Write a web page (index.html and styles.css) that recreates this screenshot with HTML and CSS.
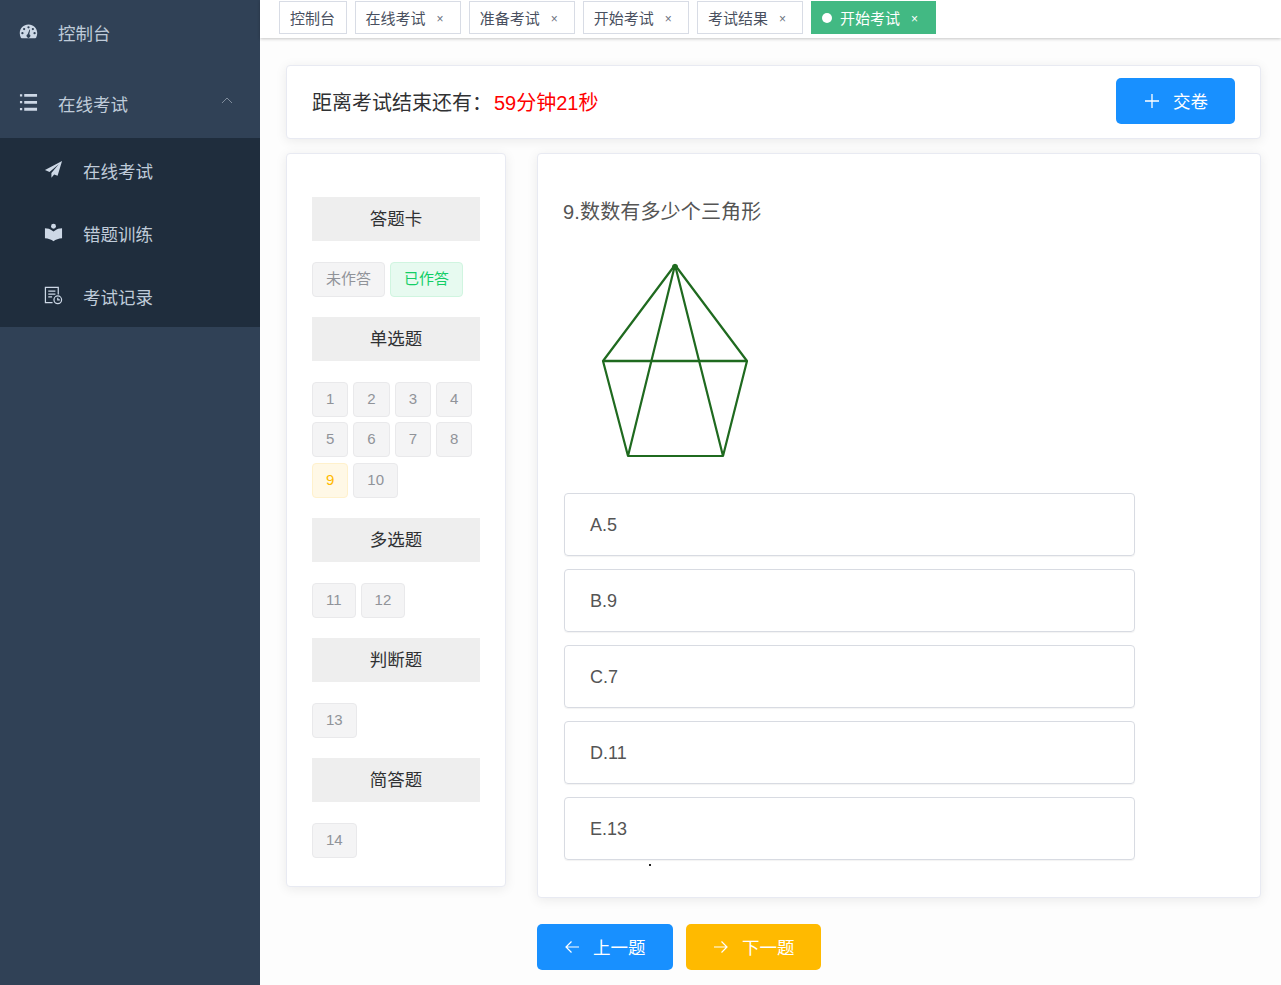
FILE: index.html
```html
<!DOCTYPE html>
<html lang="zh-CN">
<head>
    <meta charset="UTF-8">
    <title>开始考试</title>
    <link rel="stylesheet" href="styles.css">
</head>
<body>
    <div class="app">
        <aside class="sidebar">
            <div class="menu-item">
                <svg class="menu-icon" viewBox="0 0 20 20"><path fill-rule="evenodd" d="M10 2.500C4.800 2.500 .8 6.600.8 11.800c0 1.700.5 3.300 1.200 4.700.2.300.5.500.9.500h14.200c.4 0 .7-.2.9-.5.7-1.400 1.200-3 1.200-4.700 0-5.200-4-9.300-9.200-9.300zM10 4.400a1.200 1.200 0 1 1 0 2.400 1.200 1.200 0 0 1 0-2.400zM5.400 6.200a1.200 1.200 0 1 1 0 2.400 1.200 1.200 0 0 1 0-2.400zM3.600 10.600a1.200 1.200 0 1 1 0 2.400 1.200 1.200 0 0 1 0-2.400zM16.400 10.600a1.200 1.200 0 1 1 0 2.400 1.200 1.200 0 0 1 0-2.400zM14.600 6.200a1.200 1.200 0 1 1 0 2.400 1.200 1.200 0 0 1 0-2.400zM11.200 7.600l.5 1-.9 4.400a1.900 1.900 0 1 1-1.700 0z"/></svg>
                <span>控制台</span>
            </div>
            <div class="menu-item">
                <svg class="menu-icon" viewBox="0 0 20 20"><path d="M1 1.200h2.400v2.400H1zM1 8.500h2.400v2.400H1zM1 15.800h2.400v2.400H1zM5.500 1H19v3H5.500zM5.500 8.300H19v3H5.500zM5.500 15.600H19v3H5.500z"/></svg>
                <span>在线考试</span>
                <svg class="menu-arrow" viewBox="0 0 12 7"><path d="M1 6l5-5 5 5" fill="none" stroke="currentColor"/></svg>
            </div>
            <div class="submenu">
                <div class="submenu-item">
                    <svg class="menu-icon" viewBox="0 0 20 20"><path d="M19 1L1 10.500l4.800 2.100L15.500 4.500 7.800 13.800v4.900l2.900-3.500 3.600 1.500z"/></svg>
                    <span>在线考试</span>
                </div>
                <div class="submenu-item">
                    <svg class="menu-icon" viewBox="0 0 20 20"><circle cx="10" cy="3.500" r="2.600"/><path d="M1 5.500c3 0 5.500.7 7 2.200l2 1.300 2-1.300c1.500-1.500 4-2.200 7-2.200v10.500c-3.500.2-6.800 1.300-9 3.200-2.200-1.900-5.500-3-9-3.200z"/></svg>
                    <span>错题训练</span>
                </div>
                <div class="submenu-item">
                    <svg class="menu-icon icon-line" viewBox="0 0 20 20"><path d="M15 9V1.500H1.500v16H9"/><path d="M4.500 5.500h7.500M4.500 8.500h7.500M4.500 11.500h4"/><circle cx="14.500" cy="14.500" r="4"/><path d="M14.500 12.300v2.400h2.200"/></svg>
                    <span>考试记录</span>
                </div>
            </div>
        </aside>

        <div class="main">
            <div class="tabs">
                <div class="tab">控制台</div>
                <div class="tab">在线考试<span class="tab-close">×</span></div>
                <div class="tab">准备考试<span class="tab-close">×</span></div>
                <div class="tab">开始考试<span class="tab-close">×</span></div>
                <div class="tab">考试结果<span class="tab-close">×</span></div>
                <div class="tab active"><span class="tab-dot"></span>开始考试<span class="tab-close">×</span></div>
            </div>

            <div class="content">
                <div class="card timer-card">
                    <div class="timer">距离考试结束还有：<span class="time-left">59分钟21秒</span></div>
                    <button class="btn btn-blue submit-btn">
                        <svg class="btn-icon" viewBox="0 0 14 14"><path d="M7 0v14M0 7h14" fill="none" stroke="currentColor" stroke-width="1.300"/></svg>
                        <span>交卷</span>
                    </button>
                </div>

                <div class="exam">
                    <div class="card answer-card">
                        <div class="group-title">答题卡</div>
                        <div class="tag-row">
                            <span class="tag">未作答</span>
                            <span class="tag tag-done">已作答</span>
                        </div>
                        <div class="group-title">单选题</div>
                        <div class="tag-row">
                            <span class="tag">1</span>
                            <span class="tag">2</span>
                            <span class="tag">3</span>
                            <span class="tag">4</span>
                            <span class="tag">5</span>
                            <span class="tag">6</span>
                            <span class="tag">7</span>
                            <span class="tag">8</span>
                            <span class="tag tag-current">9</span>
                            <span class="tag">10</span>
                        </div>
                        <div class="group-title">多选题</div>
                        <div class="tag-row">
                            <span class="tag">11</span>
                            <span class="tag">12</span>
                        </div>
                        <div class="group-title">判断题</div>
                        <div class="tag-row">
                            <span class="tag">13</span>
                        </div>
                        <div class="group-title">简答题</div>
                        <div class="tag-row">
                            <span class="tag">14</span>
                        </div>
                    </div>

                    <div class="question-col">
                        <div class="card question-card">
                            <div class="question-title">9.数数有多少个三角形</div>
                            <svg class="question-img" viewBox="564 245 220 230">
                                <g fill="none" stroke="#1f6a1f" stroke-width="2.200" stroke-linejoin="round">
                                    <path d="M675 265L603 361L628 456H723L747 361L675 265Z"/>
                                    <path d="M675 265L628 456M675 265L723 456"/>
                                    <path d="M603 361H747" stroke-width="2.600"/>
                                </g>
                                <circle cx="675" cy="267" r="3" fill="#1f6a1f"/>
                            </svg>
                            <div class="options">
                                <div class="option">A.5</div>
                                <div class="option">B.9</div>
                                <div class="option">C.7</div>
                                <div class="option">D.11</div>
                                <div class="option">E.13</div>
                            </div>
                            <div class="speck"></div>
                        </div>

                        <div class="pager">
                            <button class="btn btn-blue pager-btn">
                                <svg class="btn-icon" viewBox="0 0 14 14"><path d="M14 7H1M6.500 1.500L1 7l5.500 5.500" fill="none" stroke="currentColor" stroke-width="1.200"/></svg>
                                <span>上一题</span>
                            </button>
                            <button class="btn btn-amber pager-btn">
                                <svg class="btn-icon" viewBox="0 0 14 14"><path d="M0 7h13M7.500 1.500L13 7l-5.500 5.500" fill="none" stroke="currentColor" stroke-width="1.200"/></svg>
                                <span>下一题</span>
                            </button>
                        </div>
                    </div>
                </div>
            </div>
        </div>
    </div>
</body>
</html>
```

FILE: styles.css
```css
* {
    margin: 0;
    padding: 0;
    box-sizing: border-box;
}

body {
    font-family: "Liberation Sans", "Noto Sans CJK SC", sans-serif;
    background: #fff;
    overflow: hidden;
}

.app {
    display: flex;
    height: 100vh;
}

/* sidebar */
.sidebar {
    flex: 0 0 260px;
    background: #304156;
    color: #bfcbd9;
    font-size: 17.5px;
    overflow: hidden;
}

.menu-item {
    display: flex;
    align-items: center;
    height: 70px;
    padding-left: 19px;
}

.menu-item:first-child {
    height: 72px;
    margin-top: -4px;
}

.menu-icon {
    width: 19px;
    height: 19px;
    margin: -2px 20px 0 0;
    fill: #cdd8e6;
    color: #cdd8e6;
    flex: none;
}

.icon-line {
    fill: none;
    stroke: currentColor;
    stroke-width: 1.3;
}

.menu-arrow {
    width: 12px;
    height: 7px;
    margin-left: auto;
    margin-right: 27px;
    margin-top: -5px;
    color: #7f8c9c;
}

.submenu {
    background: #1f2d3d;
}

.submenu-item {
    display: flex;
    align-items: center;
    height: 63px;
    padding: 2px 0 0 44px;
}

/* tabs */
.main {
    flex: 1;
    min-width: 0;
    display: flex;
    flex-direction: column;
}

.tabs {
    position: relative;
    display: flex;
    gap: 7.6px;
    height: 38px;
    padding: 1px 0 0 19px;
    background: #fff;
    box-shadow: 0 1px 3px rgba(0,0,0,0.22);
    flex: none;
}

.tab {
    display: flex;
    align-items: center;
    height: 33px;
    padding: 0 11px 0 10px;
    border: 1px solid #d8dce5;
    background: #fff;
    color: #495060;
    font-size: 15px;
    white-space: nowrap;
}

.tab-close {
    margin: 2px 4.5px 0 10px;
    font-size: 12px;
    width: 9px;
    color: #6b7280;
    text-align: center;
}

.tab.active {
    background: #42b983;
    border-color: #42b983;
    color: #fff;
}

.tab.active .tab-close {
    color: #fff;
}

.tab-dot {
    width: 10px;
    height: 10px;
    border-radius: 50%;
    background: #fff;
    margin-right: 8px;
}

/* content */
.content {
    flex: 1;
    padding: 27px 20px 0 26px;
    background: #fdfdfd;
}

.card {
    background: #fff;
    border: 1px solid #e8eaf2;
    border-radius: 4px;
    box-shadow: 0 2px 12px rgba(0,0,0,0.08);
}

.timer-card {
    display: flex;
    align-items: center;
    justify-content: space-between;
    height: 74px;
    padding: 0 25px 2px;
}

.timer {
    font-size: 20px;
    color: #303133;
}

.time-left {
    margin-left: 2px;
    color: #ff0000;
}

.btn {
    display: flex;
    align-items: center;
    height: 46px;
    border: none;
    border-radius: 5px;
    color: #fff;
    font-family: inherit;
    font-size: 17.5px;
}

.btn span {
    margin-top: -2px;
}

.btn-blue {
    background: #1890ff;
}

.btn-amber {
    background: #ffba00;
}

.btn-icon {
    width: 14px;
    height: 14px;
    margin-right: 14px;
}

.submit-btn {
    width: 119px;
    padding-left: 29px;
}

.exam {
    display: flex;
    align-items: flex-start;
    gap: 31px;
    margin-top: 14px;
}

/* answer card */
.answer-card {
    flex: 0 0 220px;
    height: 734px;
    padding: 43px 25px 0;
}

.group-title {
    height: 44px;
    line-height: 45px;
    background: #eeeeee;
    color: #303133;
    font-size: 17.5px;
    text-align: center;
}

.tag-row {
    display: flex;
    flex-wrap: wrap;
    gap: 5.4px 5px;
    margin: 21px 0 20px;
}

.tag {
    height: 35px;
    line-height: 32px;
    padding: 0 13px;
    border: 1px solid #e9e9eb;
    border-radius: 4px;
    background: #f4f4f5;
    color: #909399;
    font-size: 15px;
}

.tag-done {
    background: #e7faf0;
    border-color: #d0f5e0;
    color: #13ce66;
}

.tag-current {
    background: #fff8e6;
    border-color: #fff1cc;
    color: #ffba00;
}

/* question */
.question-col {
    flex: 1;
    min-width: 0;
}

.question-card {
    padding: 44px 26px 31px;
    height: 745px;
}

.question-title {
    height: 28px;
    margin-left: -1px;
    line-height: 28px;
    letter-spacing: 0.15px;
    font-size: 20px;
    color: #555;
}

.question-img {
    display: block;
    width: 220px;
    height: 230px;
    margin: 19px 0 18px;
}

.options {
    display: flex;
    flex-direction: column;
    gap: 13px;
    width: 571px;
}

.option {
    height: 63px;
    line-height: 62px;
    padding-left: 25px;
    border: 1px solid #d8dbe2;
    border-radius: 4px;
    box-shadow: 0 1px 1px rgba(0,0,0,0.05);
    font-size: 18px;
    color: #555;
}

.speck {
    width: 2px;
    height: 2px;
    margin: 4px 0 0 85px;
    background: #222;
}

.pager {
    display: flex;
    gap: 13px;
    margin-top: 26px;
}

.pager-btn {
    width: 136px;
    padding-left: 28px;
}

.pager-btn + .pager-btn {
    width: 135px;
}
```
